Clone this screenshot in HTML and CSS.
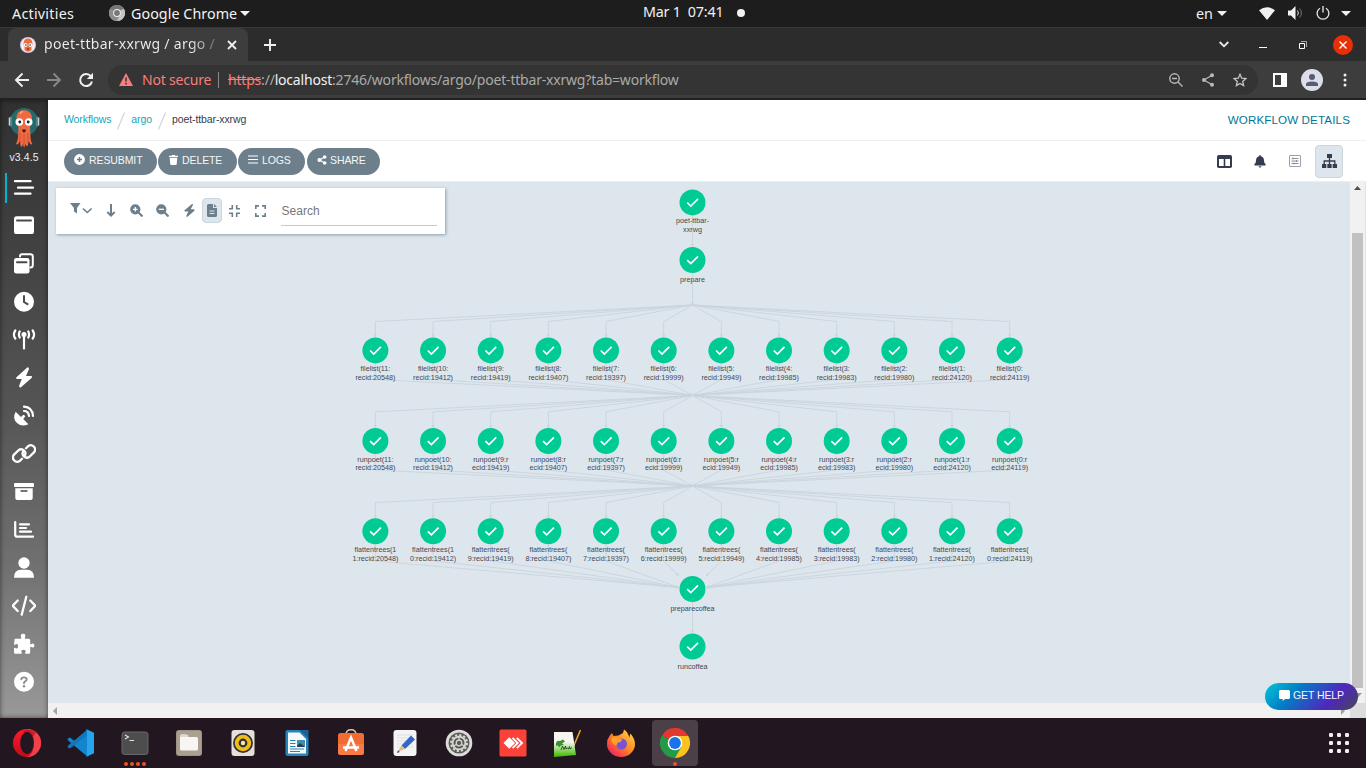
FILE: index.html
```html
<!DOCTYPE html>
<html lang="en">
<head>
<meta charset="utf-8">
<title>poet-ttbar-xxrwg / argo</title>
<link rel="stylesheet" href="styles.css">
</head>
<body>
<div class="desktop">
  <header class="topbar">
    <div class="topbar-left">
      <span class="activities">Activities</span>
      <svg class="app-icon" width="16" height="16" viewBox="0 0 16 16"><circle cx="8" cy="8" r="8" fill="#a6a6a6"/><path d="M8 8L1 4A8 8 0 0 1 15 4Z" fill="#777"/><path d="M1 4A8 8 0 0 0 8 16L11 10 8 8Z" fill="#8c8c8c"/><path d="M15 4A8 8 0 0 1 8 16L11.5 9V5Z" fill="#c4c4c4"/><circle cx="8" cy="8" r="3.9" fill="#efefef"/><circle cx="8" cy="8" r="2.9" fill="#777"/></svg>
      <span class="app-name">Google Chrome</span>
      <span class="caret"></span>
    </div>
    <div class="topbar-clock"><span class="clock-text">Mar 1 &nbsp;07:41</span><span class="notify-dot"></span></div>
    <div class="topbar-right">
      <span class="lang">en</span><span class="caret"></span>
      <svg class="wifi" width="16" height="13" viewBox="0 0 16 13"><path d="M0 3.2Q8-2.6 16 3.2L8 13Z" fill="#f2f2f2"/></svg>
      <svg class="volume" width="16" height="14" viewBox="0 0 16 14"><path d="M0 4.5h3L7.5 0v14L3 9.5H0Z" fill="#f2f2f2"/><path d="M9.5 4.5q1.8 2.5 0 5" fill="none" stroke="#ddd"/><path d="M11.7 2.5q3.4 4.500 0 9" fill="none" stroke="#777"/></svg>
      <svg class="power" width="14" height="14" viewBox="0 0 14 14"><path d="M4 2.200A5.900 5.900 0 1 0 10 2.200M7 0v6.500" fill="none" stroke="#ececec" stroke-width="1.300"/></svg>
      <span class="caret"></span>
    </div>
  </header>

  <div class="tabstrip">
    <div class="tab">
      <svg class="favicon" width="16" height="16" viewBox="0 0 16 16"><circle cx="8" cy="8" r="8" fill="#d3c5e4"/><circle cx="8" cy="8" r="7" fill="#f5f1f7"/><path d="M3.500 6Q4 1.500 8 1.500T12.500 6Q12.500 9 11.500 10V13Q8 16.500 4.500 13V10Q3.500 9 3.500 6Z" fill="#f26a3d"/><circle cx="5.600" cy="8" r="1.900" fill="#fff"/><circle cx="10.400" cy="8" r="1.900" fill="#fff"/><circle cx="5.900" cy="8" r=".8" fill="#222"/><circle cx="10.100" cy="8" r=".8" fill="#222"/><path d="M6.500 11.500h3l-1.500 1.800z" fill="#592a21"/></svg>
      <span class="tab-title">poet-ttbar-xxrwg / argo /</span>
      <svg class="tab-close" width="10" height="10" viewBox="0 0 10 10"><path d="M1 1l8 8M9 1l-8 8" stroke="#f0f0f0" stroke-width="1.800"/></svg>
    </div>
    <svg class="tab-new" width="12" height="12" viewBox="0 0 12 12"><path d="M6 0v12M0 6h12" stroke="#f0f0f0" stroke-width="1.900"/></svg>
    <div class="window-controls">
      <svg width="10" height="7" viewBox="0 0 10 7"><path d="M.7 1L5 5.300 9.300 1" fill="none" stroke="#eee" stroke-width="1.800"/></svg>
      <svg class="minimize" width="8" height="8" viewBox="0 0 8 8"><path d="M0 6.500h8" stroke="#fff" stroke-width="1"/></svg>
      <svg class="restore" width="8" height="8" viewBox="0 0 8 8"><path d="M2 .5h5.500V6" fill="none" stroke="#aaa"/><path d="M.5 2.500h5v5h-5z" fill="none" stroke="#fff"/></svg>
      <svg class="window-close" width="20" height="20" viewBox="0 0 20 20"><circle cx="10" cy="10" r="10" fill="#e92f05"/><path d="M6.500 6.500l7 7M13.500 6.500l-7 7" stroke="#fff" stroke-width="1.400"/></svg>
    </div>
  </div>

  <div class="navbar">
    <div class="nav-buttons">
      <svg width="16" height="16" viewBox="0 0 16 16"><path d="M15 8H2M8.500 1.500L2 8l6.500 6.500" fill="none" stroke="#f0f0f0" stroke-width="1.900"/></svg>
      <svg width="16" height="16" viewBox="0 0 16 16"><path d="M1 8h13M7.500 1.500L14 8l-6.500 6.500" fill="none" stroke="#888" stroke-width="1.900"/></svg>
      <svg width="16" height="16" viewBox="0 0 16 16"><path d="M13 4.500A6 6 0 1 0 14 9.500" fill="none" stroke="#f0f0f0" stroke-width="2"/><path d="M15 .8V7H8.800Z" fill="#f0f0f0"/></svg>
    </div>
    <div class="omnibox">
      <svg width="14" height="13" viewBox="0 0 14 13"><path d="M7 0l7 13H0Z" fill="#f67e7c"/><path d="M7 4.500v4M7 9.700v1.700" stroke="#343434" stroke-width="1.500"/></svg>
      <span class="not-secure">Not secure</span>
      <span class="omni-sep"></span>
      <span class="url"><span class="scheme">https</span>://<span class="host">localhost</span>:2746/workflows/argo/poet-ttbar-xxrwg?tab=workflow</span>
      <div class="omni-icons">
        <svg width="14" height="14" viewBox="0 0 14 14"><circle cx="5.500" cy="5.500" r="4.700" fill="none" stroke="#b9b9b9" stroke-width="1.400"/><path d="M3 5.500h5M9 9l4.500 4.500" stroke="#b9b9b9" stroke-width="1.400"/></svg>
        <svg width="12" height="14" viewBox="0 0 12 14"><path d="M10 2.200L2 7l8 4.800" fill="none" stroke="#b9b9b9" stroke-width="1.200"/><circle cx="10" cy="2.200" r="2" fill="#b9b9b9"/><circle cx="2" cy="7" r="2" fill="#b9b9b9"/><circle cx="10" cy="11.800" r="2" fill="#b9b9b9"/></svg>
        <svg width="14" height="14" viewBox="0 0 14 14"><path d="M7 1.300l1.700 3.900 4.200.4-3.200 2.800.9 4.200L7 10.400l-3.600 2.200.9-4.200L1.100 5.600l4.200-.4z" fill="none" stroke="#c4c4c4" stroke-width="1.300"/></svg>
      </div>
    </div>
    <svg class="side-panel" width="14" height="14" viewBox="0 0 14 14"><path d="M0 0h14v14H0zM2 2v10h6V2z" fill="#fff" fill-rule="evenodd"/></svg>
    <svg class="profile" width="22" height="22" viewBox="0 0 22 22"><circle cx="11" cy="11" r="11" fill="#dddee7"/><circle cx="11" cy="8" r="3" fill="#555b78"/><path d="M5 17v-1.800Q5 12.500 11 12.500t6 2.700V17Z" fill="#555b78"/></svg>
    <svg class="kebab" width="4" height="14" viewBox="0 0 4 14"><g fill="#f0f0f0"><circle cx="2" cy="2" r="1.500"/><circle cx="2" cy="7" r="1.500"/><circle cx="2" cy="12" r="1.500"/></g></svg>
  </div>

  <div class="app">
    <aside class="sidebar">
      <svg class="logo" width="32" height="44" viewBox="0 0 32 44"><circle cx="16" cy="17" r="14" fill="#246b6c"/><path d="M16 5Q8.500 5.500 8.500 13q0 6 2 9l-.5 10q-.5 5-2 7 2 1.500 4-3l.5 5q1.500 2 2.500-2l1 4 1.500-4q1.500 4 2.500 1l.5-4q2 4.500 4 3-1.800-2-2-7l-.5-10q2-3 2-9Q23.500 5.500 16 5Z" fill="#ef6a42"/><path d="M12 28v10M16 29v11M20 28v10" stroke="#c74a2c" stroke-width=".8"/><path d="M12 9q1-2.500 3-2.500" stroke="#ffa185" stroke-width="1.500" fill="none"/><circle cx="11.300" cy="17" r="3.800" fill="#fff"/><circle cx="20.700" cy="17" r="3.800" fill="#fff"/><circle cx="11.800" cy="17" r="1.400" fill="#10202a"/><circle cx="20.200" cy="17" r="1.400" fill="#10202a"/><path d="M14 24.500h4q-.5 3-2 3t-2-3z" fill="#391d25"/><path d="M1.500 12.500v8M30.500 12.500v8" stroke="#c7d7dc" stroke-width="1.500"/><path d="M3 11.500v10M29 11.500v10" stroke="#688f99" stroke-width="1.500"/></svg>
      <div class="version">v3.4.5</div>
      <nav class="side-nav">
        <a class="side-item side-item-active"><svg viewBox="0 0 24 24"><path d="M3 5.200h15.500M6 11.700h15M3 17.700h15.500" class="st" stroke-width="2.300"/></svg></a>
        <a class="side-item"><svg viewBox="0 0 24 24"><rect x="2" y="2.300" width="20" height="17.700" rx="2.600"/><path d="M5 6.500h14" class="cut" stroke-width="2"/></svg></a>
        <a class="side-item"><svg viewBox="0 0 24 24"><path d="M8 4.500Q8 2.200 10 2.200h8.500q2.300 0 2.300 2.300v8.500q0 2.500-2.500 2.500" class="st" stroke-width="2"/><rect x="2" y="6" width="15.500" height="15.500" rx="2.300"/><path d="M5 10.200h9.500" class="cut" stroke-width="2"/></svg></a>
        <a class="side-item"><svg viewBox="0 0 24 24"><circle cx="12" cy="11.700" r="10"/><path d="M12 6v6l3.500 2.200" class="cut" stroke-width="2"/></svg></a>
        <a class="side-item"><svg viewBox="0 0 24 24"><circle cx="12" cy="6.500" r="2.500"/><path d="M12 7v13.500M7.700 3.500q-1.500 3 0 6M16.300 3.500q1.500 3 0 6M3.300 2.500q-2.800 4 0 8M20.700 2.500q2.800 4 0 8" class="st" stroke-width="2.200"/></svg></a>
        <a class="side-item"><svg viewBox="0 0 24 24"><path d="M15.500 1.300L4.200 11.500q-.4 1.500 1 1.500h4.600L7 20q.3 1.900 2 1.200l10.800-9.500q1-1.600-.8-1.800h-5l3-7q.1-1.700-1.500-1.600Z"/></svg></a>
        <a class="side-item"><svg viewBox="0 0 24 24"><path d="M3.700 7.800L9 13l2-2q2-.5 2.200 1.500l-2 2.500 5.200 5.200Q10 23.500 5 19T3.700 7.800Z"/><path d="M12 7q4.500 0 5 5M12 2.700q8.300.5 9 9.300" class="st" stroke-width="2.200"/></svg></a>
        <a class="side-item"><svg viewBox="0 0 24 24"><path d="M10 16.700l-2.200 2.200a4.300 4.300 0 0 1-6-6L6.500 8.200a4.300 4.300 0 0 1 6 6M14 6.300l2.200-2.200a4.300 4.300 0 0 1 6 6l-4.700 4.700a4.300 4.300 0 0 1-6-6" class="st" stroke-width="2.300"/></svg></a>
        <a class="side-item"><svg viewBox="0 0 24 24"><rect x="2" y="3" width="20" height="4" rx=".8"/><path d="M3.300 8.200h17.400V18q0 2-2 2H5.300q-2 0-2-2z"/><path d="M9 11h6" class="cut" stroke-width="1.300"/></svg></a>
        <a class="side-item"><svg viewBox="0 0 24 24"><path d="M3.200 4v12.700q0 2 2 2H21M8 6.300h9M8 10h6M8 13.700h11" class="st" stroke-width="2.200"/></svg></a>
        <a class="side-item"><svg viewBox="0 0 24 24"><circle cx="12" cy="7" r="5.700"/><path d="M2 21.700q0-8 7-8h6q7 0 7 8z"/></svg></a>
        <a class="side-item"><svg viewBox="0 0 24 24"><path d="M5.700 6.500L.7 11.700l5 5.300M18.300 6.500l5 5.200-5 5.300M14.300 2.800L9.700 20.700" class="st" stroke-width="2.300"/></svg></a>
        <a class="side-item"><svg viewBox="0 0 24 24"><path d="M2.500 8.300Q2 7 3.500 6.800H9q.8-.7 0-1.800Q8 2 11 1.800T13.200 5q-.8 1.200 0 1.800h3.500q1.500 0 1.500 1.500v3.500q.5 1 1.800 0 2.300-.8 2.400 1.700t-2.400 1.700q-1.300-.9-1.800 0v5.100q0 1.500-1.500 1.500h-3.200q-1-.5 0-1.800.6-2.200-2-2.200t-2.100 2.200q1 1.300 0 1.800H3.500Q2 21.800 2 20.300v-4q.5-1 1.800 0 2.300.6 2.300-2.100t-2.300-2q-1.300 1-1.800 0z"/></svg></a>
        <a class="side-item"><svg viewBox="0 0 24 24"><circle cx="12" cy="11.800" r="10"/><path d="M9.300 9.300Q9.500 7.300 12 7.300t2.700 2q0 1.300-1.500 2-1.200.6-1.200 1.900" class="cut cut-light" stroke-width="1.800"/><circle cx="12" cy="16.200" r="1.200" fill="#888"/></svg></a>
      </nav>
    </aside>

    <main class="main">
      <div class="crumbs">
        <a class="crumb">Workflows</a>
        <svg width="10" height="18" viewBox="0 0 10 18"><path d="M1.500 17.500L8.500.5" stroke="#ccd6dd" stroke-width="1.200"/></svg>
        <a class="crumb">argo</a>
        <svg width="10" height="18" viewBox="0 0 10 18"><path d="M1.500 17.500L8.500.5" stroke="#ccd6dd" stroke-width="1.200"/></svg>
        <span class="crumb-current">poet-ttbar-xxrwg</span>
        <span class="page-title">WORKFLOW DETAILS</span>
      </div>
      <div class="actions">
        <button class="btn btn-resubmit"><svg width="11" height="11" viewBox="0 0 11 11"><circle cx="5.500" cy="5.500" r="5.400" fill="#fff"/><path d="M5.500 3v5M3 5.500h5" stroke="#6d7f8b" stroke-width="1.400"/></svg>RESUBMIT</button>
        <button class="btn btn-delete"><svg width="9" height="10" viewBox="0 0 10 11"><path d="M0 .8h3l.5-.8h3l.5.8h3v1.400H0zM.8 3h8.400l-.6 7q-.1 1-1 1H2.400q-.9 0-1-1z" fill="#fff"/></svg>DELETE</button>
        <button class="btn btn-logs"><svg width="10" height="11" viewBox="0 0 10 11"><path d="M0 2h10M0 5.500h10M0 9h10" stroke="#fff" stroke-width="1.200"/></svg>LOGS</button>
        <button class="btn btn-share"><svg width="10" height="10" viewBox="0 0 10 11"><path d="M8 2.200L2.200 5.500 8 8.800" fill="none" stroke="#fff" stroke-width="1.300"/><g fill="#fff"><circle cx="8" cy="2.200" r="2"/><circle cx="2.200" cy="5.500" r="2.200"/><circle cx="8" cy="8.800" r="2"/></g></svg>SHARE</button>
        <div class="view-icons">
          <span class="view-icon"><svg width="15" height="13" viewBox="0 0 15 13"><rect width="15" height="13" rx="1.800" fill="#363c4f"/><path d="M2 4h4.700v7H2zM8.300 4H13v7H8.300z" fill="#fff"/></svg></span>
          <span class="view-icon"><svg width="12" height="13" viewBox="0 0 12 13"><path d="M6 0q.8 0 .8 1.200Q10 2 10 5.500 10 8 11.500 9q.7 1.200-.5 1.400H1Q-.2 10.200.5 9 2 8 2 5.500 2 2 5.200 1.200 5.200 0 6 0zM4.500 11.200h3Q7.300 12.600 6 12.600T4.500 11.200z" fill="#363c4f"/></svg></span>
          <span class="view-icon"><svg width="12" height="12" viewBox="0 0 12 12"><rect x=".5" y=".5" width="11" height="11" rx=".5" fill="none" stroke="#9ba0ac"/><path d="M2.500 3.500h7M2.500 6h7M2.500 8.500h7M4 2.500v2M7.500 5v2M5 7.500v2" stroke="#8a909e"/></svg></span>
          <span class="view-icon view-icon-on"><svg width="15" height="14" viewBox="0 0 15 14"><path d="M5 0h5v4H5zM0 10h4.300v4H0zM5.350 10h4.300v4h-4.300zM10.700 10H15v4h-4.300z" fill="#363c4f"/><path d="M7.500 4v6M2.200 10V7h10.600v3" fill="none" stroke="#363c4f" stroke-width="1.300"/></svg></span>
        </div>
      </div>
      <div class="viewport">
        <svg class="graph" id="graph" width="1302" height="521" viewBox="48 182 1302 521"></svg>
        <div class="vscroll"><svg class="arrow-up" width="7" height="4" viewBox="0 0 9 5"><path d="M0 5L4.500 0 9 5z" fill="#505050"/></svg><div class="vthumb"></div><svg class="arrow-down" width="9" height="5" viewBox="0 0 9 5"><path d="M0 0h9L4.500 5z" fill="#999"/></svg></div>
        <div class="hscroll"><svg width="4" height="8" viewBox="0 0 4 8"><path d="M4 0v8L0 4z" fill="#a3a3a3"/></svg><svg width="4" height="8" viewBox="0 0 4 8"><path d="M0 0v8L4 4z" fill="#a3a3a3"/></svg></div>
        <div class="corner"></div>
        <div class="panel">
          <span class="tool tool-filter"><svg width="23" height="12" viewBox="0 0 23 12"><path d="M0 0h10.500L7 5v5.500L4 8.500V5z" fill="#6d7f8b"/><path d="M13 5.500l4.300 4 4.300-4" fill="none" stroke="#6d7f8b" stroke-width="1.600"/></svg></span>
          <span class="tool"><svg width="10" height="13" viewBox="0 0 10 13"><path d="M5 0v11" stroke="#6d7f8b" stroke-width="2"/><path d="M1.300 8L5 11.600 8.700 8" fill="none" stroke="#6d7f8b" stroke-width="2"/></svg></span>
          <span class="tool tool-zoom"><svg width="13" height="13" viewBox="0 0 13 13"><circle cx="5.300" cy="5.300" r="5.100" fill="#6d7f8b"/><path d="M8 8l4.500 4.500" stroke="#6d7f8b" stroke-width="2"/><path d="M5.300 3v4.600M3 5.300h4.600" stroke="#fff" stroke-width="1.300"/></svg></span>
          <span class="tool tool-zoom"><svg width="13" height="13" viewBox="0 0 13 13"><circle cx="5.300" cy="5.300" r="5.100" fill="#6d7f8b"/><path d="M8 8l4.500 4.500" stroke="#6d7f8b" stroke-width="2"/><path d="M2.700 5.300h5.200" stroke="#fff" stroke-width="1.300"/></svg></span>
          <span class="tool"><svg width="11" height="13" viewBox="0 0 11 13"><path d="M8 0L.2 6.500 1 7.600h3.300L2.200 12q.3 1.200 1.300.7L10.700 6.500 10 5.300H6.700L9 1Q9-.2 8 0z" fill="#6d7f8b"/></svg></span>
          <span class="tool tool-on"><svg width="10" height="13" viewBox="0 0 10 13"><path d="M1.500 0H6v4h4v7.500Q10 13 8.500 13h-7Q0 13 0 11.500v-10Q0 0 1.500 0zM7 0l3 3H7z" fill="#6d7f8b"/><path d="M2.500 7h5M2.500 9.500h5" stroke="#dee6ed" stroke-width="1.100"/></svg></span>
          <span class="tool tool-compress"><svg width="11" height="12" viewBox="0 0 11 12"><path d="M3.300 0v3.800H0M7.700 0v3.800H11M3.300 12V8.200H0M7.700 12V8.200H11" fill="none" stroke="#6d7f8b" stroke-width="1.600"/></svg></span>
          <span class="tool tool-expand"><svg width="11" height="12" viewBox="0 0 11 12"><path d="M.8 4V.9H4M7 .9h3.200V4M10.200 8v3.100H7M4 11.100H.8V8" fill="none" stroke="#6d7f8b" stroke-width="1.600"/></svg></span>
          <span class="search">Search</span>
        </div>
        <button class="help"><svg width="11" height="11" viewBox="0 0 11 11"><path d="M1.500 0h8Q11 0 11 1.500v6Q11 9 9.500 9H6l-2.300 2V9H1.500Q0 9 0 7.500v-6Q0 0 1.500 0z" fill="#fff"/></svg>GET HELP</button>
      </div>
    </main>
  </div>

  <footer class="dock">
    <span class="dock-item"><svg viewBox="0 0 28 28"><defs><linearGradient id="op" x2="0" y2="1"><stop stop-color="#ff1b2d"/><stop offset="1" stop-color="#c20a1a"/></linearGradient></defs><ellipse cx="14" cy="14" rx="14" ry="14" fill="url(#op)"/><path d="M14 0a14 14 0 0 1 0 28q7-3 7-14T14 0z" fill="#f0414a"/><path d="M9.500 3Q16-1.500 23 3.300L20 8z" fill="#a70014" opacity=".5"/><ellipse cx="14" cy="14" rx="6.800" ry="11" fill="#221720"/></svg></span>
    <span class="dock-item"><svg viewBox="0 0 28 28"><path d="M20 .8L7.500 12 3 8.500.8 9.600v1.600L20 27.200l1-7z" fill="#1385cc"/><path d="M.8 18.400L3 19.500 20.500 6V.8L.8 16.800z" fill="#1077bd"/><path d="M20 .6l7 3.100v20.600l-7 3.100q-1 .2-1.500-.3 1.500.3 1.500-1V2q0-1.400-1.500-1 .5-.6 1.500-.4z" fill="#27a4ee"/></svg></span>
    <span class="dock-item"><svg viewBox="0 0 28 28"><rect x="1" y="3" width="26" height="22.500" rx="2.500" fill="#4d4d4d" stroke="#686868"/><path d="M4 6l3.500 2L4 10M8.500 11.500H13" fill="none" stroke="#e5e5e5" stroke-width="1.100"/></svg><span class="dots"><i></i><i></i><i></i><i></i></span></span>
    <span class="dock-item"><svg viewBox="0 0 28 28"><rect x="1" y="1" width="26" height="26" rx="3" fill="#9c9383"/><rect x="2" y="2" width="24" height="24" rx="2" fill="#aaa08f"/><path d="M5 7q0-1.500 1.500-1.500h4.300L13 8h8.500Q23 8 23 9.500V20q0 1.500-1.500 1.500h-15Q5 21.500 5 20z" fill="#f7f6f3"/><path d="M5 8h8l1-1-2-1.500H6.500Q5 5.500 5 7z" fill="#ded8cd"/></svg></span>
    <span class="dock-item"><svg viewBox="0 0 28 28"><rect x="2.500" y="1" width="23" height="26" rx="3" fill="#e5e0da"/><circle cx="14" cy="14" r="10" fill="#333"/><circle cx="14" cy="14" r="6.300" fill="none" stroke="#f0bd19" stroke-width="3.800"/><circle cx="14" cy="14" r="2.200" fill="#f7e6a5"/></svg></span>
    <span class="dock-item"><svg viewBox="0 0 28 28"><path d="M4.500 1H17l8.500 8v16q0 2-2 2h-19q-2 0-2-2V3q0-2 2-2z" fill="#2686b8"/><path d="M5 3.500h11.500L23 10v14.500H5z" fill="#f7fafb"/><path d="M17 1h8.500v8.500z" fill="#17639a"/><path d="M7 11.500h5.500M7 14.500h5.500M7 17.500h5.500M7 20h14M7 22.500h10" stroke="#2686b8" stroke-width="1.200"/><path d="M14 11h8v7h-8z" fill="#428dae"/><path d="M14 17l3-3 5 4h-8z" fill="#273e4b"/></svg></span>
    <span class="dock-item"><svg viewBox="0 0 28 28"><path d="M9 6Q9 .8 14 .8T19 6" fill="none" stroke="#dfc49d" stroke-width="1.500"/><rect x="1" y="4" width="26" height="22" rx="2.500" fill="#f36b34"/><path d="M1 15h26v8.500q0 2.500-2.500 2.500h-21Q1 26 1 23.500z" fill="#ff8f5a" opacity=".45"/><path d="M8.500 22L14 8.500 19.500 22M6 18.500h16" fill="none" stroke="#fff" stroke-width="2.500"/></svg></span>
    <span class="dock-item"><svg viewBox="0 0 28 28"><rect x="2.500" y="1" width="23" height="26" rx="3" fill="#f4f4f4"/><path d="M6 6h16M6 9h16M6 12h16M6 15h16M6 18h16" stroke="#ddd"/><path d="M10.500 16.500L20 6.500l4 4L14 20z" fill="#3465c9"/><path d="M10.500 16.500L14 20l-7.500 3z" fill="#e6b98c"/><path d="M6 24l1-2.700 1.800 1.600z" fill="#444"/></svg></span>
    <span class="dock-item"><svg viewBox="0 0 28 28"><circle cx="14" cy="14" r="13.300" fill="#dcdcd9"/><circle cx="14" cy="14" r="10.500" fill="#5b5b58"/><circle cx="14" cy="14" r="8" fill="none" stroke="#d8d8d4" stroke-width="2" stroke-dasharray="2.200 1.990"/><circle cx="14" cy="14" r="6.400" fill="none" stroke="#d8d8d4" stroke-width="1.800"/><circle cx="14" cy="14" r="2.800" fill="none" stroke="#d8d8d4" stroke-width="1.200"/><path d="M14 8v4M8.800 17l3.300-2M19.200 17L16 15" stroke="#d8d8d4" stroke-width="1.300"/></svg></span>
    <span class="dock-item"><svg viewBox="0 0 28 28"><rect x=".5" y=".5" width="27" height="27" rx="1.500" fill="#fa4238"/><path d="M4.500 14l5.800-5.800 5.800 5.800-5.800 5.800z" fill="#fff"/><path d="M13.500 8.800l5.200 5.200-5.200 5.200M17.800 8.800L23 14l-5.200 5.200" fill="none" stroke="#fff" stroke-width="1.900"/><path d="M11.800 6.500l7.500 7.500-7.500 7.500" fill="none" stroke="#fa4238" stroke-width="0"/></svg></span>
    <span class="dock-item"><svg viewBox="0 0 28 28"><defs><linearGradient id="np" x2="0" y2="1"><stop offset=".4" stop-color="#f5f7ef"/><stop offset=".95" stop-color="#49bd09"/></linearGradient></defs><path d="M1 3h18.500L23 26 1 28z" fill="url(#np)"/><path d="M3 14q1-3 4-2l3-1.500 2 2-3 2 2 1.500-3 .5-2 2-1-2-2 .5z" fill="#3c8f35"/><path d="M8 21l1.500-4 1.500 3.500 1.500-3.500.5 3q1.500-2 2.500 0l1-2.500.5 2.500 2-1.500" fill="none" stroke="#234a1b" stroke-width=".9"/><path d="M27.500 1L21.500 15" stroke="#e6a32d" stroke-width="1.600"/><path d="M21.500 15l-.8 2.500" stroke="#eee"/></svg></span>
    <span class="dock-item"><svg viewBox="0 0 28 28"><defs><linearGradient id="ff" x1="1" x2=".1" y2="1"><stop stop-color="#ffe14a"/><stop offset=".5" stop-color="#ff8a24"/><stop offset="1" stop-color="#ef1265"/></linearGradient></defs><path d="M2.500 7L5 4l1.500 3 5-.5L16 4l1-3.500Q22 4 22 9l1.500-4.500Q28 10 28 15a14 13 0 0 1-28 0Q0 10 2.500 7z" fill="url(#ff)"/><circle cx="14.500" cy="15" r="5.500" fill="#7953d6"/><path d="M4 9.500q4-3 7.500 0l4 1q-1 2.500-4.500 3-2 1.500-1 3-5 0-6-7z" fill="#ffa028"/></svg></span>
    <span class="dock-item dock-item-active"><svg class="chrome-icon" viewBox="0 0 30 30"><path d="M15 15L2 7.500a15 15 0 0 1 26 0z" fill="#e1392d"/><path d="M15 15L28 7.500A15 15 0 0 1 15 30z" fill="#fcc31e"/><path d="M2 7.500A15 15 0 0 0 15 30l6.500-11.300L15 15z" fill="#249a49"/><path d="M15 8h13.300L21.500 19z" fill="#fcc31e"/><circle cx="15" cy="15" r="7.300" fill="#fff"/><circle cx="15" cy="15" r="5.900" fill="#1a73e8"/></svg><span class="dots"><i></i></span></span>
    <svg class="app-grid" width="20" height="20" viewBox="0 0 20 20"><g fill="#f2eff1"><rect width="4" height="4" rx="1.200"/><rect x="8" width="4" height="4" rx="1.200"/><rect x="16" width="4" height="4" rx="1.200"/><rect y="8" width="4" height="4" rx="1.200"/><rect x="8" y="8" width="4" height="4" rx="1.200"/><rect x="16" y="8" width="4" height="4" rx="1.200"/><rect y="16" width="4" height="4" rx="1.200"/><rect x="8" y="16" width="4" height="4" rx="1.200"/><rect x="16" y="16" width="4" height="4" rx="1.200"/></g></svg>
  </footer>
</div>
<script src="graph.js"></script>
</body>
</html>
```
FILE: styles.css
```css
* { box-sizing: border-box; }
body { margin: 0; width: 1366px; height: 768px; overflow: hidden; font-family: "Liberation Sans", Arial, sans-serif; }
svg { display: block; flex: none; }
span, a { white-space: nowrap; }
.desktop { display: flex; flex-direction: column; height: 768px; }

/* GNOME top bar */
.topbar { height: 28px; background: #1d1d1d; border-bottom: 1px solid #393939; color: #f2f2f2; font: 14.3px/27px "Noto Sans", sans-serif; display: grid; grid-template-columns: 643px 1fr auto; }
.topbar-left, .topbar-clock, .topbar-right { display: flex; align-items: center; height: 26px; }
.topbar-left { padding-left: 12px; }
.activities { width: 97px; letter-spacing: .25px; }
.app-name { width: 105px; margin-left: 6px; letter-spacing: .05px; }
.activities { letter-spacing: .25px; }
.caret { border: 5px solid transparent; border-top-color: #f2f2f2; border-bottom: 0; margin-left: 4px; }
.clock-text { width: 81px; letter-spacing: -.2px; line-height: 24px; padding-bottom: 2px; }
.notify-dot { width: 8px; height: 8px; border-radius: 50%; background: #f2f2f2; margin-left: 13px; }
.topbar-right { padding-right: 15px; }
.lang { width: 17px; }
.wifi { margin-left: 32px; }
.volume { margin-left: 13px; }
.power { margin-left: 12px; margin-right: 7px; }

/* Browser chrome */
.tabstrip { height: 33px; background: #2c2c2c; display: flex; align-items: center; padding-left: 8px; }
.tab { width: 240px; height: 33px; background: #3d3d3d; border-radius: 8px 8px 0 0; display: flex; align-items: center; padding-left: 12px; }
.tab-title { width: 175px; margin-left: 8px; padding-bottom: 2px; font: 14px/20px "Noto Sans", sans-serif; letter-spacing: .3px; overflow: hidden; background: linear-gradient(90deg, #f0f0f0 145px, #555 178px); -webkit-background-clip: text; background-clip: text; color: transparent; }
.tab-close { margin-left: 8px; }
.tab-new { margin-left: 16px; }
.window-controls { margin-left: auto; display: flex; align-items: center; padding-right: 13px; }
.minimize { margin-left: 30px; }
.restore { margin-left: 32px; }
.window-close { margin-left: 26px; }
.navbar { height: 39px; background: #3d3d3d; border-bottom: 2px solid #231f23; display: flex; align-items: center; padding: 0 19px 0 14px; }
.nav-buttons { display: flex; gap: 16px; width: 94px; }
.omnibox { width: 1150px; height: 30px; border-radius: 15px; background: #343434; display: flex; align-items: center; padding: 0 11px; font: 14px/20px "Noto Sans", sans-serif; }
.not-secure { color: #f67e7c; margin-left: 9px; width: 76px; letter-spacing: -.2px; }
.omni-sep { width: 1px; height: 16px; background: #8a8a8a; }
.url { margin-left: 9px; color: #aaa; letter-spacing: -.2px; }
.scheme { color: #f67e7c; text-decoration: line-through; }
.host { color: #f2f2f2; }
.omni-icons { display: flex; gap: 19px; margin-left: auto; align-items: center; }
.side-panel { margin-left: 15px; }
.profile { margin-left: 14px; }
.kebab { margin-left: auto; }

/* Argo application */
.app { height: 618px; display: flex; }
.sidebar { width: 48px; background: linear-gradient(#303030, #555 50%, #707070 75%, #999); box-shadow: inset 0 0 5px rgba(0,0,0,.55); display: flex; flex-direction: column; align-items: center; padding-top: 5px; }
.logo { height: 44px; }
.version { font-size: 10.5px; line-height: 14px; color: #e7edf0; margin-top: 1px; letter-spacing: .1px; }
.side-nav { width: 48px; margin-top: 5px; }
.side-item { height: 38px; display: flex; align-items: center; justify-content: center; fill: #fff; position: relative; }
.side-item svg { width: 24px; height: 24px; }
.side-item-active::before { content: ""; position: absolute; left: 5px; top: 4px; width: 2px; height: 30px; background: #00b5cd; }
.st { fill: none; stroke: #fff; stroke-linecap: round; stroke-linejoin: round; }
.cut { fill: none; stroke: #4a4a4a; stroke-linecap: round; }
.cut-light { stroke: #888; }
.main { width: 1318px; display: flex; flex-direction: column; background: #fff; }
.crumbs { height: 41px; border-bottom: 1px solid #edeff1; padding: 0 16px 2px; display: flex; align-items: center; font-size: 10.5px; letter-spacing: -.1px; }
.crumb { color: #18a5b6; }
.crumbs svg { margin: 4px 5px 0; }
.crumb-current { color: #363c4a; }
.page-title { margin-left: auto; color: #007792; font-size: 11.6px; letter-spacing: .13px; }
.actions { height: 41px; padding: 0 7px 0 16px; display: flex; align-items: center; border-bottom: 1px solid #edf0f3; }
.btn, .help { border: 0; color: #f5f7f8; font: 10.5px/14px "Liberation Sans", Arial, sans-serif; letter-spacing: -.1px; height: 27px; border-radius: 14px; background: #6d7f8b; display: flex; align-items: center; padding: 0 0 3px 10px; white-space: nowrap; }
.btn svg { margin-right: 4px; }
.btn-resubmit { width: 93px; margin-right: 1px; }
.btn-delete { width: 79px; margin-right: 1px; padding-left: 11px; }
.btn-logs { width: 67px; margin-right: 2px; }
.btn-share { width: 73px; }
.btn-share svg { margin-right: 3px; }
.view-icons { margin-left: auto; display: flex; align-items: center; gap: 7px; padding-right: 16px; }
.view-icon { width: 28px; height: 33px; display: flex; align-items: center; justify-content: center; }
.view-icon:nth-child(2), .view-icon:nth-child(3) { padding-left: 1px; }
.view-icon-on { background: #dee6ed; border: 1px solid #ccd6dd; border-radius: 4px; }
.viewport { height: 536px; display: grid; grid-template: 521px 15px / 1302px 16px; position: relative; }
.graph { background: #dee6ed; }
.vscroll { background: #f1f1f1; border-right: 1px solid #dce4eb; display: flex; flex-direction: column; align-items: center; padding-top: 4px; }
.vthumb { width: 11px; height: 455px; background: #c1c1c1; margin-top: 43px; }
.arrow-down { margin-top: 5px; }
.hscroll { background: #f1f1f1; display: flex; align-items: center; justify-content: space-between; padding: 0 5px; }
.corner { background: #dcdcdc; }
.panel { position: absolute; left: 8px; top: 6px; width: 389px; height: 46px; background: #fff; box-shadow: 1px 1px 3px rgba(80,110,130,.6); display: flex; padding: 10px 0 0 12px; }
.tool { width: 26px; height: 25px; display: flex; align-items: center; justify-content: center; }
.tool-filter { width: 30px; padding: 0 4px 4px 0; }
.tool-zoom { padding-right: 1px; }
.tool-on { width: 20px; background: #dee6ed; border: 1px solid #ccd6dd; border-radius: 4px; }
.tool-compress { width: 25px; }
.tool-expand { width: 27px; }
.search { margin-left: 7px; width: 156px; height: 28px; border-bottom: 1px solid #c9c9c9; padding-left: .5px; color: #777; font-size: 12px; line-height: 26px; letter-spacing: .05px; }
.help { position: absolute; left: 1217px; top: 501px; width: 93px; padding-left: 14px; background: linear-gradient(133deg, #00bcd4 5%, #037dc6 32%, #5026bd 70%, #474265 95%); }
.help svg { margin-right: 3px; }
.edge { fill: none; stroke: #cad4dd; stroke-width: .9; }
.arrowhead { fill: #c9d3dc; }
.node { fill: #00cb94; }
.check { fill: none; stroke: #fff; stroke-width: 1.7; }
.label { font-size: 7.2px; fill: #43464f; text-anchor: middle; }

/* Dock */
.dock { height: 50px; background: #221720; display: flex; align-items: center; padding-right: 17px; }
.dock-item { width: 54px; height: 46px; display: flex; align-items: center; justify-content: center; position: relative; }
.dock-item svg { width: 28px; height: 28px; }
.dock-item .chrome-icon { width: 30px; height: 30px; }
.dock-item-active { width: 46px; margin-left: 4px; background: #4b4048; border-radius: 4px; }
.dots { position: absolute; left: 0; right: 0; bottom: 0; display: flex; justify-content: center; gap: 2px; }
.dots i { width: 4px; height: 4px; border-radius: 50%; background: #e95420; }
.app-grid { margin-left: auto; }
```
FILE: graph.js
```js
const graph = document.getElementById('graph');
const NS = 'http://www.w3.org/2000/svg';
const CENTER = 692.5;
const recids = [20548, 19412, 19419, 19407, 19397, 19999, 19949, 19985, 19983, 19980, 24120, 24119];
const columns = recids.map((_, i) => 375.4 + i * 57.66);

function add(tag, attrs, text) {
  const el = document.createElementNS(NS, tag);
  for (const key in attrs) el.setAttribute(key, attrs[key]);
  if (text) el.textContent = text;
  graph.appendChild(el);
}

function edge(points) {
  add('polyline', { class: 'edge', points: points.map(p => p.join(',')).join(' ') });
  const [x, y] = points[points.length - 1];
  const [px, py] = points[points.length - 2];
  const angle = Math.atan2(y - py, x - px) * 180 / Math.PI;
  add('path', { class: 'arrowhead', d: 'M0 0L-3 -1.5V1.5Z', transform: `translate(${x} ${y}) rotate(${angle})` });
}

function node(x, y, lines, offsets) {
  add('circle', { class: 'node', cx: x, cy: y, r: 13 });
  add('path', { class: 'check', d: `M${x - 5.3} ${y + .1}l3.6 3.500 7.200 -7.200` });
  lines.forEach((line, i) => add('text', { class: 'label', x: x, y: y + offsets[i] }, line));
}

edge([[CENTER, 215], [CENTER, 247]]);
edge([[CENTER, 273], [CENTER, 305]]);
edge([[CENTER, 602], [CENTER, 633.5]]);

[[305, 321.5, 337.5], [395.5, 411.8, 428], [486, 502.5, 518.5]].forEach(([hub, bend, end]) => {
  columns.forEach(x => edge([[CENTER, hub], [x, bend], [x, end]]));
});
[[363.5, 379.5, 395.5], [454, 470, 486]].forEach(([start, bend, hub]) => {
  columns.forEach(x => edge([[x, start], [x, bend], [CENTER, hub]]));
});
columns.forEach((x, i) => {
  const side = x < CENTER ? -1 : 1;
  const near = i === 5 || i === 6;
  edge([[x, 544.5], [x, 561], [CENTER + side * 13.5, near ? 576 : 587.5]]);
});

node(CENTER, 202.4, ['poet-ttbar-', 'xxrwg'], [20.8, 29.5]);
node(CENTER, 260, ['prepare'], [22]);
columns.forEach((x, i) => {
  const n = 11 - i;
  const r = recids[i];
  node(x, 350.4, [`filelist(${n}:`, `recid:${r})`], [20.8, 29.5]);
  node(x, 441, n > 9 ? [`runpoet(${n}:`, `recid:${r})`] : [`runpoet(${n}:r`, `ecid:${r})`], [21, 29]);
  const head = n > 9 ? 'flattentrees(1' : 'flattentrees(';
  const tail = n > 9 ? `${n - 10}:recid:${r})` : `${n}:recid:${r})`;
  node(x, 531.3, [head, tail], [20.8, 29.5]);
});
node(CENTER, 589, ['preparecoffea'], [22]);
node(CENTER, 646.5, ['runcoffea'], [22.3]);
```
